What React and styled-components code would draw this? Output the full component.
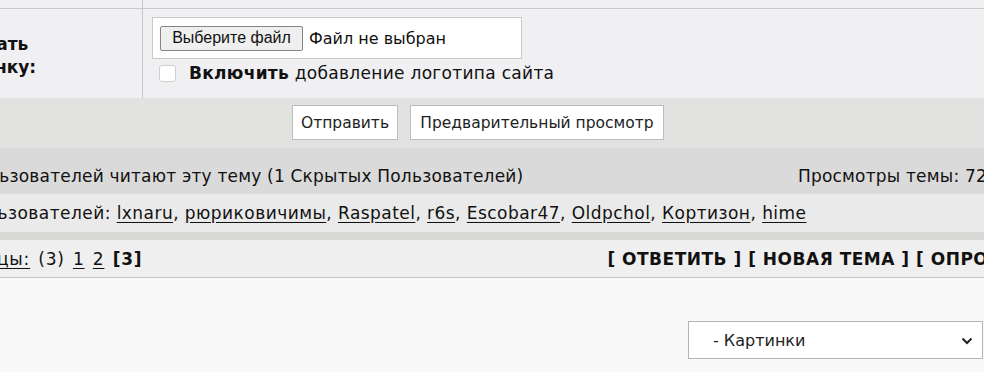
import React from "react";
import styled, { createGlobalStyle } from "styled-components";

const Global = createGlobalStyle`
  html, body { margin: 0; padding: 0; }
  body {
    background: #f9f9f9;
    overflow: hidden;
    width: 984px;
    height: 372px;
    font-family: "DejaVu Sans", Verdana, sans-serif;
    color: #111;
  }
`;

const Board = styled.div`
  margin-left: -170px;
  width: 1296px;
  display: flex;
  flex-direction: column;
`;

const FormRow = styled.div`
  display: grid;
  grid-template-columns: 313px 1fr;
  background: #f0eff1;
  height: ${(p) => p.$h}px;
  border-bottom: ${(p) => (p.$line ? "1px solid #c9c9c9" : "none")};
`;

const LabelCell = styled.div`
  border-right: 1px solid #c8c8c8;
  display: flex;
  align-items: center;
  padding-left: 108px;
  padding-top: 4px;
  font-weight: bold;
  font-size: 17px;
  line-height: 23px;
`;

const FieldCell = styled.div`
  padding: 8px 0 0 9px;
  display: flex;
  flex-direction: column;
  align-items: flex-start;
`;

const FileBox = styled.div`
  box-sizing: border-box;
  width: 370px;
  height: 42px;
  background: #fff;
  border: 1px solid #c9c9c9;
  display: flex;
  align-items: center;
  padding-left: 7px;
  gap: 6px;
  font-family: "DejaVu Sans", Verdana, sans-serif;
  font-size: 16px;
`;

const FileButton = styled.span`
  box-sizing: border-box;
  height: 25px;
  width: 143px;
  display: flex;
  align-items: center;
  justify-content: center;
  background: #efefef;
  border: 1px solid #858585;
  border-radius: 2px;
  color: #111;
  font-family: "Liberation Sans", Arial, sans-serif;
`;

const CheckLine = styled.label`
  display: flex;
  align-items: center;
  margin-top: 4px;
  margin-left: 7px;
  font-size: 17px;
  letter-spacing: 0.3px;
  gap: 13px;
`;

const Box = styled.span`
  box-sizing: border-box;
  width: 17px;
  height: 17px;
  border: 1px solid #cfcfcf;
  border-radius: 3px;
  background: #fff;
`;

const ButtonBar = styled.div`
  background: #e2e3e0;
  height: 50px;
  box-sizing: border-box;
  padding-top: 7px;
  display: flex;
  align-items: flex-start;
  justify-content: center;
  gap: 12px;
`;

const Btn = styled.button`
  box-sizing: border-box;
  height: 35px;
  width: ${(p) => p.$w}px;
  background: #fff;
  border: 1px solid #bcbcbc;
  font-family: "DejaVu Sans", Verdana, sans-serif;
  font-size: 15.5px;
  color: #222;
  padding: 0;
`;

const InfoRow = styled.div`
  background: ${(p) => p.$bg};
  height: ${(p) => p.$h}px;
  box-sizing: border-box;
  display: flex;
  align-items: ${(p) => p.$align || "center"};
  justify-content: space-between;
  padding: ${(p) => p.$pad};
  font-size: 17px;
  letter-spacing: ${(p) => p.$ls || 0}px;
  border-bottom: ${(p) => (p.$line ? "1px solid #c8c8c8" : "none")};
  white-space: nowrap;
`;

const Strip = styled.div`
  height: 8px;
  background: #d8d9d7;
`;

const Link = styled.a`
  color: #111;
  text-decoration: underline;
  text-underline-offset: 3px;
`;

const Bold = styled.b`
  font-weight: bold;
`;

const Pages = styled.span`
  letter-spacing: 0.8px;
  word-spacing: 2px;
`;

const Actions = styled.span`
  font-weight: bold;
  letter-spacing: 0.5px;
`;

const Bottom = styled.div`
  display: flex;
  justify-content: flex-end;
  padding: 43px 1px 0 0;
`;

const SelectWrap = styled.div`
  position: relative;
  width: 295px;
  height: 38px;
`;

const Select = styled.select`
  appearance: none;
  box-sizing: border-box;
  width: 100%;
  height: 100%;
  background: #fff;
  border: 1px solid #b4b4b4;
  border-radius: 0;
  padding-left: 24px;
  font-family: "DejaVu Sans", Verdana, sans-serif;
  font-size: 16px;
  color: #222;
`;

const Chevron = styled.svg`
  position: absolute;
  right: 10px;
  top: 16px;
  pointer-events: none;
`;

const users = ["lxnaru", "рюриковичимы", "Raspatel", "r6s", "Escobar47", "Oldpchol", "Кортизон", "hime"];

export default function App() {
  return (
    <>
      <Global />
      <Board>
        <FormRow $h={8} $line>
          <LabelCell />
          <div />
        </FormRow>
        <FormRow $h={89}>
          <LabelCell>
            Закачать
            <br />
            картинку:
          </LabelCell>
          <FieldCell>
            <FileBox>
              <FileButton>Выберите файл</FileButton>
              <span>Файл не выбран</span>
            </FileBox>
            <CheckLine>
              <Box />
              <span>
                <Bold>Включить</Bold> добавление логотипа сайта
              </span>
            </CheckLine>
          </FieldCell>
        </FormRow>
        <ButtonBar>
          <Btn $w={106}>Отправить</Btn>
          <Btn $w={254}>Предварительный просмотр</Btn>
        </ButtonBar>
        <InfoRow $bg="#dadada" $h={46} $align="flex-end" $ls={0.2} $pad="0 139px 8px 118px">
          <span>9 Пользователей читают эту тему (1 Скрытых Пользователей)</span>
          <span>Просмотры темы: 72</span>
        </InfoRow>
        <InfoRow $bg="#eaeaea" $h={38} $ls={0.45} $pad="0 140px 0 115px">
          <span>
            8 Пользователей:{" "}
            {users.map((u, i) => (
              <React.Fragment key={u}>
                <Link href="#">{u}</Link>
                {i < users.length - 1 ? ", " : ""}
              </React.Fragment>
            ))}
          </span>
        </InfoRow>
        <Strip />
        <InfoRow $bg="#efefef" $h={38} $line $pad="0 110px 0 97px">
          <Pages>
            <Link href="#">Страницы:</Link> (3) <Link href="#">1</Link> <Link href="#">2</Link>{" "}
            <Bold>[3]</Bold>
          </Pages>
          <Actions>[ ОТВЕТИТЬ ] [ НОВАЯ ТЕМА ] [ ОПРОС ]</Actions>
        </InfoRow>
      </Board>
      <Bottom>
        <SelectWrap>
          <Select defaultValue="img">
            <option value="img">- Картинки</option>
          </Select>
          <Chevron width="12" height="8" viewBox="0 0 12 8">
            <path d="M1.5 1.5 L6 6 L10.5 1.5" fill="none" stroke="#222" strokeWidth="2" />
          </Chevron>
        </SelectWrap>
      </Bottom>
    </>
  );
}
